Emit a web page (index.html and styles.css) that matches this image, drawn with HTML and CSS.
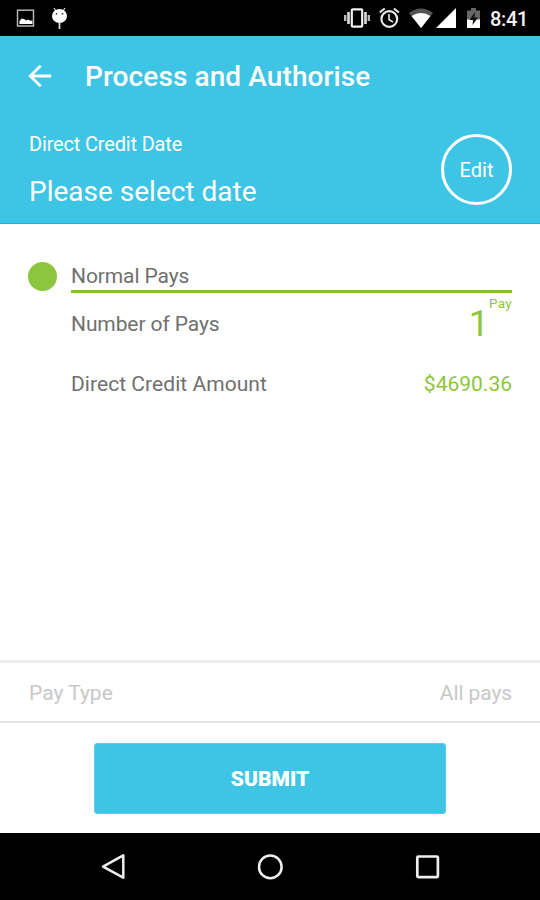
FILE: index.html
```html
<!DOCTYPE html>
<html lang="en">
<head>
  <meta charset="UTF-8">
  <title>Process and Authorise</title>
  <link rel="stylesheet" href="styles.css">
</head>
<body>

  <div class="status-bar">
    <svg width="80" height="36" viewBox="0 0 80 36">
      <!-- picture -->
      <rect x="17.5" y="10.2" width="16" height="15.8" fill="none" stroke="#b5b5b5" stroke-width="1.5"/>
      <path d="M19.5 24v-3l2.200-2.500 2.500.5 2 1.500 2-1 2 1.200 2.200-.2V24z" fill="#fff"/>
      <!-- bug -->
      <path d="M54 8l2 3M65 8l-2 3" stroke="#ddd" stroke-width="1.2"/>
      <ellipse cx="59.5" cy="16" rx="7.5" ry="6.9" fill="#fff"/>
      <path d="M59.5 22v7" stroke="#ddd" stroke-width="1.8"/>
      <circle cx="56.5" cy="13.8" r=".9" fill="#333"/>
      <circle cx="62.5" cy="13.8" r=".9" fill="#333"/>
    </svg>
    <svg class="status-right" width="152" height="36" viewBox="336 0 152 36">
      <!-- vibrate -->
      <rect x="351.8" y="9.3" width="10.4" height="17.4" rx="1" fill="none" stroke="#f2f2f2" stroke-width="2.2"/>
      <path d="M348.5 12v12M365.5 12v12" stroke="#ddd" stroke-width="2.6"/>
      <path d="M345.2 15v6M368.8 15v6" stroke="#bbb" stroke-width="2.4"/>
      <!-- alarm -->
      <circle cx="389.3" cy="19" r="7.9" fill="none" stroke="#e8e8e8" stroke-width="2.2"/>
      <path d="M379.7 12.5l5-4M398.9 12.5l-5-4" stroke="#e8e8e8" stroke-width="2"/>
      <path d="M389 14v5.500l4 2.700" fill="none" stroke="#e8e8e8" stroke-width="1.6"/>
      <!-- wifi -->
      <path d="M409 13q12-9 24 0L421 28z" fill="#555"/>
      <path d="M411.500 16q9.500-6 19 0L421 28z" fill="#fff"/>
      <!-- signal -->
      <path d="M456 8v20h-20z" fill="#fff"/>
      <!-- battery -->
      <path d="M467 10.500h4V8h5v2.500h4V20h-13z" fill="#666"/>
      <path d="M467 19.500h13V28h-13z" fill="#fff"/>
      <path d="M475 12l-5.500 8h3.500l-.5 5 5.500-7.500h-3.500z" fill="#111"/>
    </svg>
    <span class="clock">8:41</span>
  </div>

  <header class="header">
    <div class="title-row">
      <svg width="24" height="24" viewBox="28 63 24 24">
        <path d="M51.200 75H30.500M40.700 64.700L30.300 75l10.400 10.300" fill="none" stroke="#fff" stroke-width="2.8"/>
      </svg>
      <h1>Process and Authorise</h1>
    </div>
    <div class="date-row">
      <div>
        <div class="date-label">Direct Credit Date</div>
        <div class="date-value">Please select date</div>
      </div>
      <button class="edit">Edit</button>
    </div>
  </header>

  <main class="pays">
    <div class="dot"></div>
    <div class="pay-info">
      <div class="section-title">Normal Pays</div>
      <div class="row count-row">
        <span class="number">Number of Pays</span>
        <span class="count"><span class="one">1</span><sup>Pay</sup></span>
      </div>
      <div class="row amount-row">
        <span class="amount-label">Direct Credit Amount</span>
        <span class="amount">$4690.36</span>
      </div>
    </div>
  </main>

  <div class="pay-type">
    <span>Pay Type</span>
    <span class="type-value">All pays</span>
  </div>

  <div class="actions">
    <button class="submit">SUBMIT</button>
  </div>

  <nav class="nav-bar">
    <svg width="28" height="30" viewBox="99 852 28 30">
      <path d="M123.300 855.300v22.400L103 866.700z" fill="none" stroke="#eee" stroke-width="2.5" stroke-linejoin="round"/>
    </svg>
    <svg width="28" height="30" viewBox="256 852 28 30">
      <circle cx="270.3" cy="866.9" r="11.3" fill="none" stroke="#eee" stroke-width="2.5"/>
    </svg>
    <svg width="28" height="30" viewBox="413 852 28 30">
      <rect x="417.3" y="856.5" width="20.6" height="20.6" rx="1" fill="none" stroke="#eee" stroke-width="2.7"/>
    </svg>
  </nav>

</body>
</html>
```

FILE: styles.css
```css
* {
  box-sizing: border-box;
}
body {
  margin: 0;
  width: 540px;
  height: 900px;
  display: flex;
  flex-direction: column;
  overflow: hidden;
  background: #fff;
  color: #707070;
  font-family: Roboto, "Liberation Sans", sans-serif;
  font-size: 21px;
}
svg {
  display: block;
  flex: none;
}
button {
  padding: 0;
  color: #fff;
  font-family: inherit;
}
.status-bar {
  display: flex;
  height: 36px;
  background: #000;
}
.status-right {
  margin-left: auto;
}
.clock {
  width: 52px;
  padding-left: 2px;
  color: #f2f2f2;
  font-size: 20px;
  font-weight: 500;
  line-height: 38px;
  letter-spacing: -0.3px;
}
.header {
  height: 188px;
  background: #3ec5e5;
  border-bottom: 1px solid #16b5dc;
  color: #fff;
}
.title-row {
  display: flex;
  align-items: center;
  height: 80px;
  padding: 0 28px;
  gap: 33px;
}
h1 {
  margin: 2px 0 0;
  font-size: 28px;
  font-weight: 500;
  line-height: 36px;
  letter-spacing: 0.1px;
  white-space: nowrap;
}
.date-row {
  display: flex;
  justify-content: space-between;
  padding: 18px 28px 0 29px;
}
.date-label {
  margin-top: -2px;
  font-size: 20px;
  line-height: 24px;
  letter-spacing: -0.17px;
}
.date-value {
  margin-top: 18px;
  font-size: 28px;
  line-height: 36px;
}
.edit {
  width: 71px;
  height: 71px;
  border: 3px solid #fff;
  border-radius: 50%;
  background: none;
  font-size: 20px;
}
.pays {
  display: flex;
  flex: 1;
  padding: 38px 28px 0;
  gap: 14px;
}
.dot {
  width: 29px;
  height: 29px;
  border-radius: 50%;
  background: #8cc63f;
}
.pay-info {
  flex: 1;
}
.section-title {
  height: 31px;
  border-bottom: 3px solid #83c132;
  line-height: 28px;
  letter-spacing: -0.1px;
}
.row {
  display: flex;
  justify-content: space-between;
}
.number {
  letter-spacing: -0.1px;
}
.count-row {
  height: 60px;
  line-height: 62px;
}
.count {
  display: flex;
  color: #8cc63f;
}
.one {
  font-size: 36px;
}
sup {
  font-size: 13.5px;
  line-height: 20px;
  letter-spacing: 0.3px;
  vertical-align: baseline;
}
.amount-row {
  line-height: 62px;
}
.amount-label {
  letter-spacing: 0.05px;
}
.amount {
  color: #8cc63f;
}
.pay-type {
  display: flex;
  justify-content: space-between;
  height: 63px;
  padding: 0 28px 0 29px;
  border-top: 3px solid #ebebeb;
  border-bottom: 2px solid #e2e2e2;
  color: #c8c8c8;
  line-height: 60px;
}
.type-value {
  letter-spacing: -0.1px;
}
.actions {
  display: flex;
  justify-content: center;
  height: 110px;
  padding-top: 20px;
}
.submit {
  width: 352px;
  height: 71px;
  border: 1px solid #5acce8;
  border-radius: 3px;
  background: #3ec5e5;
  font-size: 21px;
  font-weight: 900;
}
.nav-bar {
  display: flex;
  justify-content: center;
  gap: 129px;
  height: 67px;
  padding-top: 19px;
  background: #000;
}
```
